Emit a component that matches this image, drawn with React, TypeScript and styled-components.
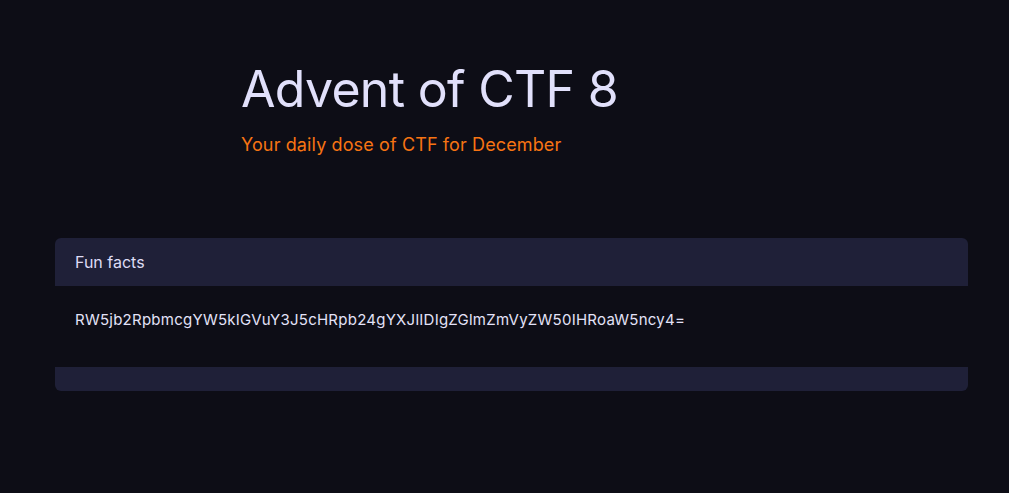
import React from 'react';
import styled, { createGlobalStyle } from 'styled-components';

const GlobalStyle = createGlobalStyle`
  html, body {
    margin: 0;
    padding: 0;
    background: #0d0d16;
  }
  body {
    font-family: Inter, "Noto Sans", "Liberation Sans", sans-serif;
    -webkit-font-smoothing: antialiased;
  }
`;

const Page = styled.main`
  min-height: 493px;
  box-sizing: border-box;
  padding: 0 41px 0 55px;
`;

const Hero = styled.header`
  padding: 57px 0 0 186px;
  height: 238px;
  box-sizing: border-box;
`;

const Title = styled.h1`
  margin: 0;
  font-size: 50px;
  font-weight: 400;
  line-height: 64px;
  color: #e1e0fb;
  letter-spacing: -0.7px;
`;

const Subtitle = styled.p`
  margin: 12px 0 0;
  font-size: 18px;
  line-height: 24px;
  letter-spacing: 0.12px;
  color: #f77413;
`;

const Card = styled.section`
  border-radius: 6px;
  overflow: hidden;
  background: #0d0d16;
`;

const CardHeader = styled.div`
  height: 48px;
  display: flex;
  align-items: center;
  padding: 0 20px;
  background: #1f2038;
  font-size: 16px;
  color: #dedcf5;
`;

const CardBody = styled.div`
  height: 81px;
  box-sizing: border-box;
  padding: 24px 20px 0;
  font-size: 15px;
  line-height: 20px;
  letter-spacing: 0.25px;
  color: #e3e2f8;
`;

const CardFooter = styled.div`
  height: 24px;
  background: #1f2038;
`;

export default function App() {
  return (
    <>
      <GlobalStyle />
      <Page>
        <Hero>
          <Title>Advent of CTF 8</Title>
          <Subtitle>Your daily dose of CTF for December</Subtitle>
        </Hero>
        <Card>
          <CardHeader>Fun facts</CardHeader>
          <CardBody>RW5jb2RpbmcgYW5kIGVuY3J5cHRpb24gYXJlIDIgZGlmZmVyZW50IHRoaW5ncy4=</CardBody>
          <CardFooter />
        </Card>
      </Page>
    </>
  );
}
